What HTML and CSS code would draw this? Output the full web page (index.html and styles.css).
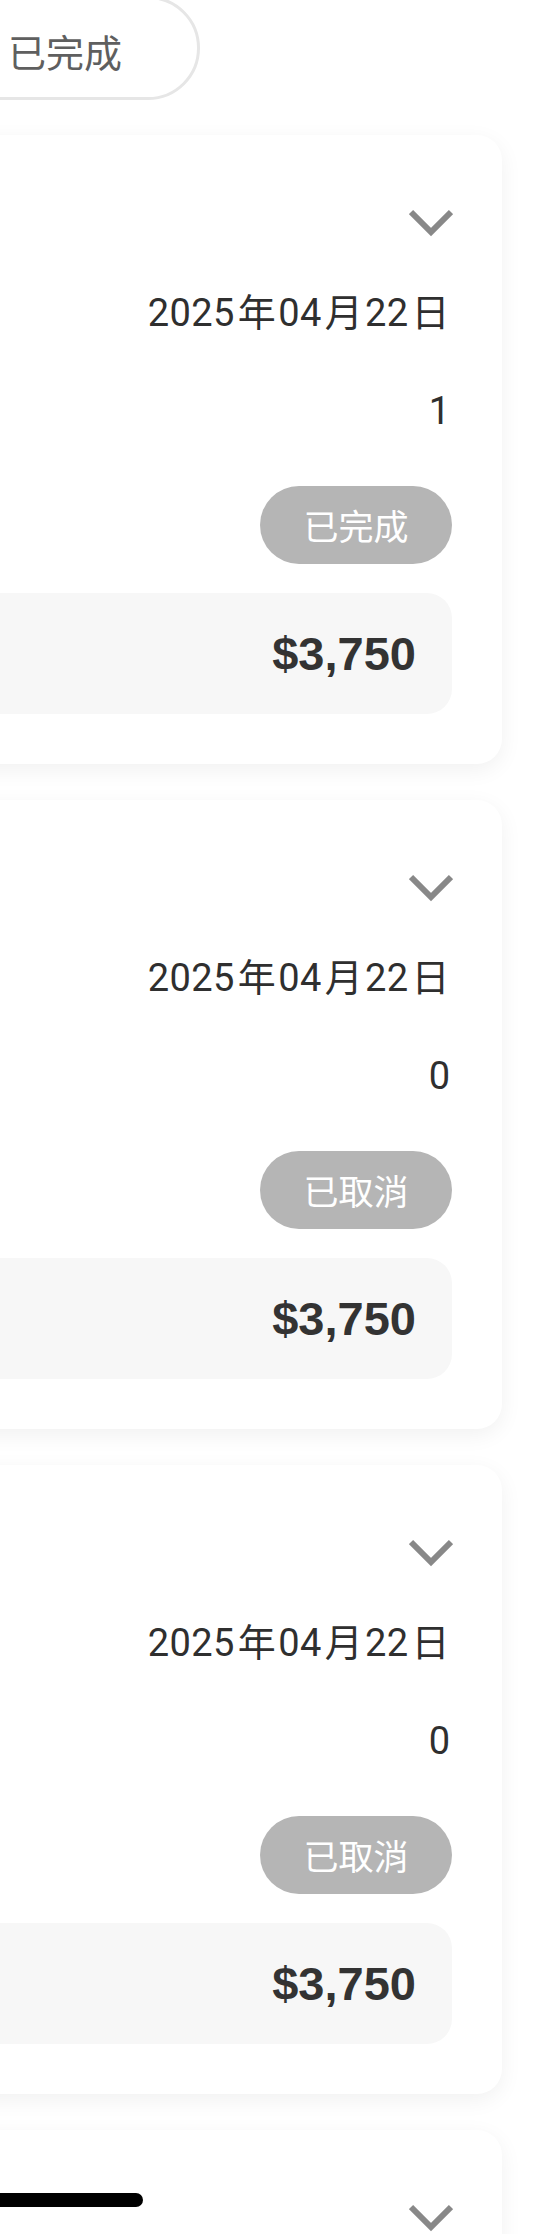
FILE: index.html
```html
<!DOCTYPE html>
<html lang="zh-Hant">
<head>
<meta charset="utf-8">
<title>訂單</title>
<link rel="stylesheet" href="styles.css">
</head>
<body>
<div class="page">
  <div class="tabs">
    <div class="tab">已完成</div>
  </div>

  <div class="list">
    <section class="card">
      <svg class="chevron" viewBox="0 0 44 27" width="44" height="27"><polyline points="2,2.1 22,22.1 42,2.1"/></svg>
      <div class="value date">2025<span class="unit">年</span>04<span class="unit">月</span>22<span class="unit">日</span></div>
      <div class="value">1</div>
      <div class="badge">已完成</div>
      <div class="price">$3,750</div>
    </section>

    <section class="card">
      <svg class="chevron" viewBox="0 0 44 27" width="44" height="27"><polyline points="2,2.1 22,22.1 42,2.1"/></svg>
      <div class="value date">2025<span class="unit">年</span>04<span class="unit">月</span>22<span class="unit">日</span></div>
      <div class="value">0</div>
      <div class="badge">已取消</div>
      <div class="price">$3,750</div>
    </section>

    <section class="card">
      <svg class="chevron" viewBox="0 0 44 27" width="44" height="27"><polyline points="2,2.1 22,22.1 42,2.1"/></svg>
      <div class="value date">2025<span class="unit">年</span>04<span class="unit">月</span>22<span class="unit">日</span></div>
      <div class="value">0</div>
      <div class="badge">已取消</div>
      <div class="price">$3,750</div>
    </section>

    <section class="card">
      <svg class="chevron" viewBox="0 0 44 27" width="44" height="27"><polyline points="2,2.1 22,22.1 42,2.1"/></svg>
    </section>
  </div>

  <div class="home-indicator"></div>
</div>
</body>
</html>
```

FILE: styles.css
```css
html, body {
  margin: 0;
  padding: 0;
  background: #ffffff;
}

body {
  width: 556px;
  height: 2234px;
  overflow: hidden;
  font-family: "Roboto", "Noto Sans CJK TC", sans-serif;
  color: #333333;
}

.page {
  position: relative;
  width: 556px;
}

.tabs {
  display: flex;
  margin-top: -4px;
}

.tab {
  box-sizing: border-box;
  margin-left: -74px;
  width: 274px;
  height: 104px;
  border: 3px solid #e6e6e6;
  border-radius: 52px;
  background: #ffffff;
  display: flex;
  align-items: center;
  justify-content: center;
  padding: 4px 0 0 4px;
  font-family: "Noto Sans CJK TC", sans-serif;
  font-size: 38px;
  color: #5f5f5f;
}

.list {
  display: flex;
  flex-direction: column;
  gap: 36px;
  margin-top: 35px;
}

.card {
  box-sizing: border-box;
  margin-left: -160px;
  margin-right: 54px;
  height: 629px;
  padding: 75px 50px 0 0;
  background: #ffffff;
  border-radius: 25px;
  box-shadow: 0 6px 22px rgba(0, 0, 0, 0.06);
  display: flex;
  flex-direction: column;
  align-items: flex-end;
}

.chevron {
  display: block;
  margin-right: -1px;
  fill: none;
  stroke: #888888;
  stroke-width: 6;
}

.value {
  font-size: 38px;
  line-height: 44px;
  height: 44px;
  color: #2f2f2f;
  margin-top: 54px;
  margin-right: 2px;
}

.date {
  margin-top: 54px;
  margin-right: 0;
  letter-spacing: 0.4px;
}

.unit {
  margin: 0 2px 0 3px;
}

.badge {
  box-sizing: border-box;
  margin-top: 53px;
  width: 192px;
  height: 78px;
  border-radius: 39px;
  background: #b5b5b5;
  color: #ffffff;
  display: flex;
  align-items: center;
  justify-content: center;
  font-family: "Noto Sans CJK TC", sans-serif;
  font-size: 35px;
  padding-bottom: 2px;
}

.price {
  box-sizing: border-box;
  margin-top: 29px;
  align-self: stretch;
  height: 121px;
  border-radius: 25px;
  background: #f7f7f7;
  display: flex;
  align-items: center;
  justify-content: flex-end;
  padding-right: 36px;
  font-family: "Liberation Sans", Arial, sans-serif;
  font-weight: 700;
  font-size: 47px;
  color: #333333;
}

.home-indicator {
  position: absolute;
  top: 2197px;
  left: -137px;
  width: 280px;
  height: 14px;
  border-radius: 7px;
  background: #000000;
}
```
